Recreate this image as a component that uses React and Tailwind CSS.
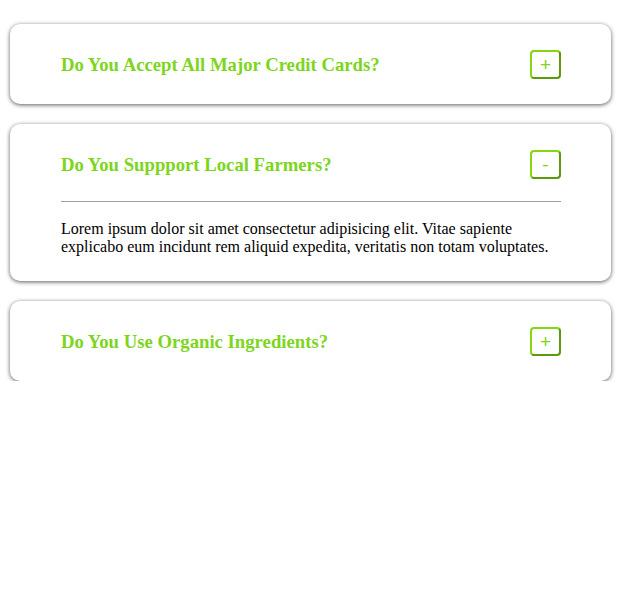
import React, { useState } from "react";

const items = [
  { q: "Do You Accept All Major Credit Cards?", a: "" },
  {
    q: "Do You Suppport Local Farmers?",
    a: "Lorem ipsum dolor sit amet consectetur adipisicing elit. Vitae sapiente explicabo eum incidunt rem aliquid expedita, veritatis non totam voluptates.",
  },
  { q: "Do You Use Organic Ingredients?", a: "" },
];

export default function App() {
  const [open, setOpen] = useState(1);
  return (
    <div className="pt-[24px] px-[10px] flex flex-col gap-[20px] font-['Liberation_Serif',serif]">
      {items.map((it, i) => (
        <div
          key={i}
          className="w-[601px] bg-white rounded-[10px] shadow-[0_1px_4px_rgba(0,0,0,0.65)] pl-[51px] pr-[50px] pt-[25px] pb-[25px]"
        >
          <div className="flex items-center justify-between h-[30px]">
            <h3 className="text-[18.72px] font-bold text-[#7dd51c] leading-none pt-[3px]">{it.q}</h3>
            <button
              onClick={() => setOpen(open === i ? -1 : i)}
              className="w-[31px] h-[29px] rounded-[4px] border-2 border-t-[#86d80e] border-l-[#86d80e] border-b-[#5b9a08] border-r-[#5b9a08] bg-white text-[#7dd51c] text-[19px] font-normal leading-none flex items-center justify-center font-['Liberation_Sans',sans-serif]"
            >
              {open === i ? "-" : "+"}
            </button>
          </div>
          {open === i && (
            <div>
              <div className="mt-[22px] h-px bg-[#a0a0a0]" />
              <p className="mt-[18px] text-[16px] leading-[18px] text-black">{it.a}</p>
            </div>
          )}
        </div>
      ))}
    </div>
  );
}
